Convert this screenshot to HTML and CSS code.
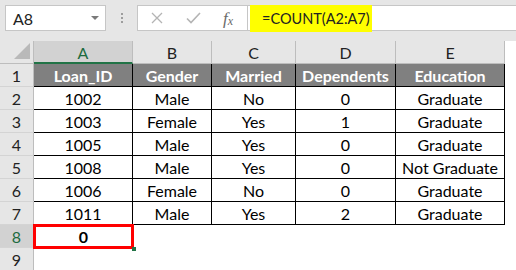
FILE: index.html
```html
<!DOCTYPE html>
<html>
<head>
<meta charset="utf-8">
<link rel="stylesheet" href="styles.css">
</head>
<body>
<div class="topbar">
  <div class="namebox">
    <span>A8</span>
    <svg class="dd" width="8" height="4" viewBox="0 0 8 4"><path d="M0 0H8L4 4Z" fill="#7a7a7a"/></svg>
  </div>
  <div class="grip"><i></i><i></i><i></i></div>
  <div class="fbar">
    <div class="fbtns">
      <svg width="12" height="12" viewBox="0 0 12 12"><path d="M1 1L11 11M11 1L1 11" stroke="#b4b4b4" stroke-width="1.3" fill="none"/></svg>
      <svg width="15" height="12" viewBox="0 0 15 12"><path d="M1 6.5L5 10.5L14 1" stroke="#b4b4b4" stroke-width="1.6" fill="none"/></svg>
      <span class="fx">f<sub>x</sub></span>
    </div>
    <div class="formula">=COUNT(A2:A7)</div>
  </div>
</div>
<div class="sheet">
  <div class="corner"><svg width="16" height="16" viewBox="0 0 16 16"><path d="M16 0V16H0Z" fill="#b9b9b9"/></svg></div>
  <div class="ch sel">A</div><div class="ch">B</div><div class="ch">C</div><div class="ch">D</div><div class="ch">E</div><div class="ch blank"></div>

  <div class="rh">1</div><div class="c h">Loan_ID</div><div class="c h">Gender</div><div class="c h">Married</div><div class="c h">Dependents</div><div class="c h">Education</div><div class="e"></div>
  <div class="rh">2</div><div class="c">1002</div><div class="c">Male</div><div class="c">No</div><div class="c">0</div><div class="c">Graduate</div><div class="e"></div>
  <div class="rh">3</div><div class="c">1003</div><div class="c">Female</div><div class="c">Yes</div><div class="c">1</div><div class="c">Graduate</div><div class="e"></div>
  <div class="rh">4</div><div class="c">1005</div><div class="c">Male</div><div class="c">Yes</div><div class="c">0</div><div class="c">Graduate</div><div class="e"></div>
  <div class="rh">5</div><div class="c">1008</div><div class="c">Male</div><div class="c">Yes</div><div class="c">0</div><div class="c">Not Graduate</div><div class="e"></div>
  <div class="rh">6</div><div class="c">1006</div><div class="c">Female</div><div class="c">No</div><div class="c">0</div><div class="c">Graduate</div><div class="e"></div>
  <div class="rh">7</div><div class="c">1011</div><div class="c">Male</div><div class="c">Yes</div><div class="c">2</div><div class="c">Graduate</div><div class="e"></div>
  <div class="rh rsel">8</div><div class="active">0<span class="handle"></span></div><div class="e"></div><div class="e"></div><div class="e"></div><div class="e"></div><div class="e"></div>
  <div class="rh">9</div><div class="e"></div><div class="e"></div><div class="e"></div><div class="e"></div><div class="e"></div><div class="e"></div>
</div>
</body>
</html>
```

FILE: styles.css
```css
html, body {
  margin: 0;
  padding: 0;
  background: #ffffff;
  font-family: Lato, "Noto Sans", sans-serif;
  font-size: 16px;
  color: #000;
  overflow: hidden;
}

.topbar {
  height: 41px;
  box-sizing: border-box;
  background: #e6e6e6;
  display: flex;
  align-items: flex-start;
  padding: 5px 0 0 5px;
}

.namebox {
  width: 101px;
  height: 26px;
  box-sizing: border-box;
  border: 1px solid #c6c6c6;
  background: #fff;
  display: flex;
  align-items: center;
  justify-content: space-between;
  padding: 0 6px 0 7px;
  color: #222;
}

.dd { margin-bottom: 1px; }

.grip {
  width: 31px;
  height: 26px;
  display: flex;
  flex-direction: column;
  align-items: center;
  justify-content: center;
  gap: 2px;
}

.grip i {
  display: block;
  width: 2px;
  height: 2px;
  background: #9d9d9d;
}

.fbar {
  flex: 1;
  height: 26px;
  box-sizing: border-box;
  border: 1px solid #c6c6c6;
  border-right: none;
  background: #fff;
  display: flex;
}

.fbtns {
  width: 110px;
  box-sizing: border-box;
  border-right: 1px solid #c6c6c6;
  display: flex;
  align-items: center;
  padding-left: 13px;
}

.fbtns svg:first-child { margin-right: 23px; }
.fbtns svg:nth-child(2) { margin-right: 22px; }

.fx {
  font-family: "Liberation Serif", serif;
  font-style: italic;
  font-size: 17px;
  color: #6a6a6a;
  line-height: 1;
}

.fx sub {
  font-size: 12px;
  vertical-align: -1px;
}

.formula {
  margin: -1px 0 -1px 2px;
  width: 122px;
  height: 27px;
  box-sizing: border-box;
  background: #ffff00;
  display: flex;
  align-items: center;
  padding-left: 12px;
  color: #222;
  font-size: 14.5px;
}

.sheet {
  display: grid;
  grid-template-columns: 34px 99px 79px 84px 100px 109px 1fr;
  grid-template-rows: repeat(10, 23px);
}

.sheet > div {
  box-sizing: border-box;
  display: flex;
  align-items: center;
  justify-content: center;
}

.corner {
  background: #e6e6e6;
  border-right: 1px solid #bdbdbd;
  border-bottom: 1px solid #bdbdbd;
  justify-content: flex-end !important;
  align-items: flex-end !important;
  padding: 0 3px 4px 0;
}

.ch {
  background: #e6e6e6;
  border-right: 1px solid #bdbdbd;
  border-bottom: 1px solid #bdbdbd;
  color: #222;
  padding-top: 1px;
}

.ch.sel {
  background: #d2d2d2;
  color: #1d6b3f;
  border-bottom: 2px solid #217346;
}

.ch.blank {
  background: #fff;
  border: none;
}

.rh {
  background: #e6e6e6;
  border-right: 1px solid #bdbdbd;
  border-bottom: 1px solid #d4d4d4;
  color: #222;
}

.rh.rsel {
  background: #d2d2d2;
  color: #1d6b3f;
}

.c {
  border-right: 1px solid #000;
  border-bottom: 1px solid #000;
  background: #fff;
}

.c.h {
  background: #808080;
  color: #fff;
  font-weight: bold;
}

.e { background: #fff; }

.active {
  position: relative;
  font-weight: bold;
  outline: 3px solid #f00;
  outline-offset: -2px;
  z-index: 1;
}

.handle {
  position: absolute;
  right: -3px;
  bottom: -3px;
  width: 4px;
  height: 4px;
  background: #217346;
}
```
